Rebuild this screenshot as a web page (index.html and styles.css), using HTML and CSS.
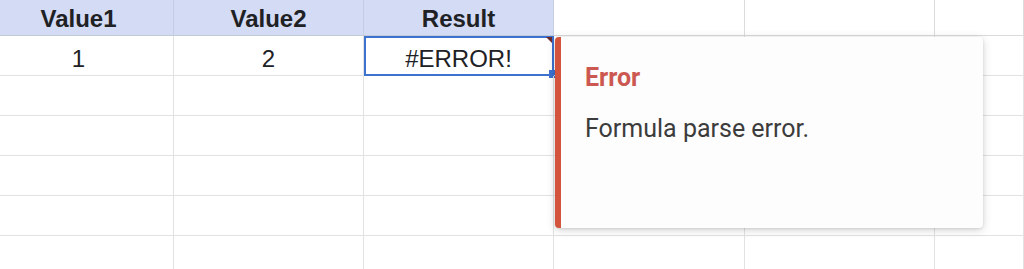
FILE: index.html
```html
<!DOCTYPE html>
<html lang="en">
<head>
<meta charset="utf-8">
<title>Sheet error</title>
<link rel="stylesheet" href="styles.css">
</head>
<body>
<div class="sheet">
  <div class="cell head first">Value1</div>
  <div class="cell head">Value2</div>
  <div class="cell head">Result</div>
  <div class="cell head-blank"></div>
  <div class="cell head-blank"></div>
  <div class="cell head-blank"></div>

  <div class="cell first">1</div>
  <div class="cell">2</div>
  <div class="cell sel">#ERROR!</div>
  <div class="cell"></div>
  <div class="cell"></div>
  <div class="cell"></div>

  <div class="cell"></div><div class="cell"></div><div class="cell"></div><div class="cell"></div><div class="cell"></div><div class="cell"></div>
  <div class="cell"></div><div class="cell"></div><div class="cell"></div><div class="cell"></div><div class="cell"></div><div class="cell"></div>
  <div class="cell"></div><div class="cell"></div><div class="cell"></div><div class="cell"></div><div class="cell"></div><div class="cell"></div>
  <div class="cell"></div><div class="cell"></div><div class="cell"></div><div class="cell"></div><div class="cell"></div><div class="cell"></div>
  <div class="cell"></div><div class="cell"></div><div class="cell"></div><div class="cell"></div><div class="cell"></div><div class="cell"></div>
</div>

<div class="tooltip">
  <div class="tt-title">Error</div>
  <div class="tt-body">Formula parse error.</div>
</div>
</body>
</html>
```

FILE: styles.css
```css
html, body {
  margin: 0;
  padding: 0;
  background: #ffffff;
  overflow: hidden;
  width: 1024px;
  height: 269px;
}

.sheet {
  display: grid;
  grid-template-columns: 174px 190px 190px 191px 190px 1fr;
  grid-template-rows: 36px repeat(6, 40px);
  width: 1024px;
  font-family: "Liberation Sans", Arial, sans-serif;
  font-size: 24px;
  color: #202124;
}

.cell {
  box-sizing: border-box;
  border-right: 1px solid #e2e2e2;
  border-bottom: 1px solid #e2e2e2;
  display: flex;
  align-items: flex-end;
  justify-content: center;
  padding-bottom: 2px;
  line-height: 28px;
  position: relative;
}

.cell.first {
  padding-right: 16px;
}

.head {
  background: #d3dcf4;
  font-weight: bold;
  border-right-color: #c5cde2;
  border-bottom-color: #c4c9d6;
}

.head-blank {
  border-right-color: #dcdcdc;
  border-bottom-color: #dadada;
}

.sel {
  outline: 2px solid #3d72d0;
  outline-offset: -2px;
  border-right-color: transparent;
}

.sel::before {
  content: "";
  position: absolute;
  top: 1px;
  right: 1px;
  width: 0;
  height: 0;
  border-top: 6px solid #6b2a2f;
  border-left: 6px solid transparent;
}

.sel::after {
  content: "";
  position: absolute;
  right: -3px;
  bottom: -3px;
  width: 7px;
  height: 8px;
  background: #3d72d0;
}

.tooltip {
  position: absolute;
  left: 555px;
  top: 37px;
  width: 428px;
  height: 191px;
  box-sizing: border-box;
  background: #fdfdfd;
  border-left: 6px solid #d4533c;
  border-radius: 4px;
  box-shadow: 0 2px 10px rgba(0, 0, 0, 0.16), 0 1px 3px rgba(0, 0, 0, 0.1);
  padding: 26px 24px 0 24px;
  font-family: Roboto, "Noto Sans", sans-serif;
  font-size: 25px;
  z-index: 2;
}

.tt-title {
  color: #cc5852;
  font-weight: bold;
  line-height: 29px;
  margin-bottom: 22px;
}

.tt-body {
  color: #3c3c3c;
  line-height: 29px;
}
```
